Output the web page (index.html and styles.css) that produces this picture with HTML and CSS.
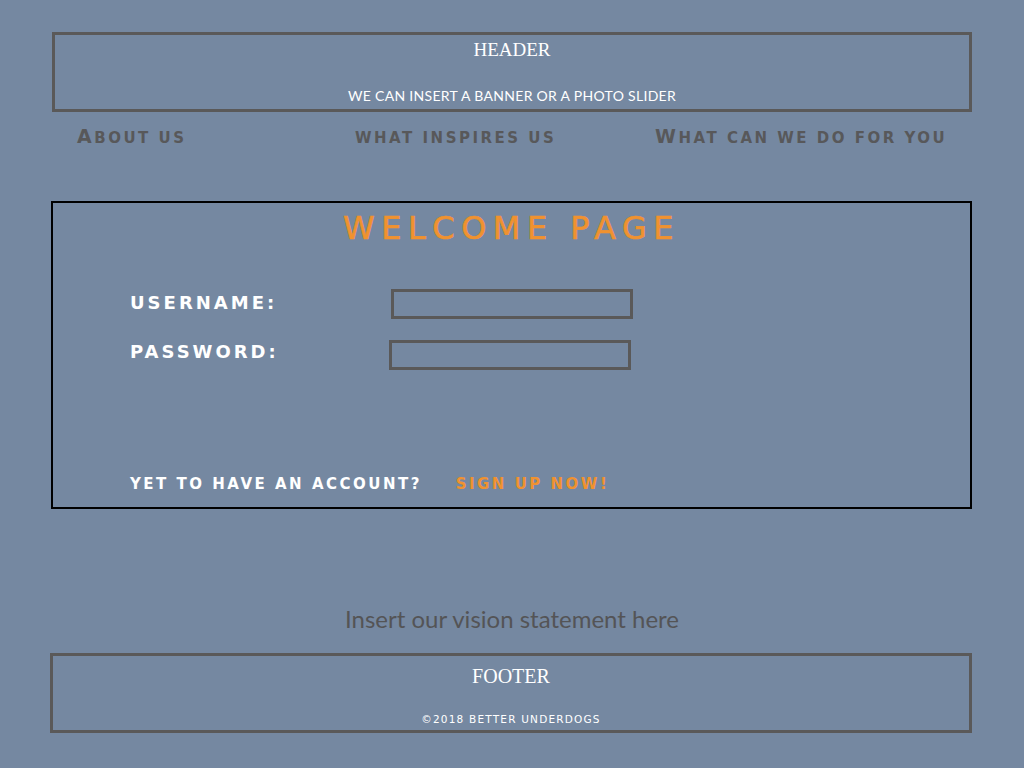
FILE: index.html
```html
<!DOCTYPE html>
<html lang="en">
<head>
<meta charset="utf-8">
<title>Welcome Page</title>
<link rel="stylesheet" href="styles.css">
</head>
<body>
<div class="page">
  <header class="header">
    <h1 class="header-title">HEADER</h1>
    <p class="header-banner">WE CAN INSERT A BANNER OR A PHOTO SLIDER</p>
  </header>
  <nav class="nav">
    <a class="nav-link nav-link-cap">About us</a>
    <a class="nav-link">what inspires us</a>
    <a class="nav-link nav-link-cap">What can we do for you</a>
  </nav>
  <main class="welcome">
    <h2 class="welcome-title">WELCOME PAGE</h2>
    <form class="login">
      <label class="login-label" for="u">USERNAME:</label>
      <input class="login-input" id="u" type="text">
      <label class="login-label login-label-pw" for="p">PASSWORD:</label>
      <input class="login-input login-input-pw" id="p" type="password">
    </form>
    <p class="signup">YET TO HAVE AN ACCOUNT? <a class="signup-link">SIGN UP NOW!</a></p>
  </main>
  <p class="vision">Insert our vision statement here</p>
  <footer class="footer">
    <h3 class="footer-title">FOOTER</h3>
    <p class="footer-copy">©2018 BETTER UNDERDOGS</p>
  </footer>
</div>
</body>
</html>
```

FILE: styles.css
```css
html, body {
  margin: 0;
  padding: 0;
  background: #7588a1;
  height: 100%;
}
.page {
  width: 920px;
  margin: 0 auto;
  padding-top: 32px;
  display: flex;
  flex-direction: column;
}
.header {
  box-sizing: border-box;
  height: 80px;
  border: 3px solid #5a5959;
  padding-top: 3px;
  display: flex;
  flex-direction: column;
  align-items: center;
}
.header-title {
  margin: 0;
  font-family: "Liberation Serif", "DejaVu Serif", serif;
  font-weight: normal;
  font-size: 19px;
  line-height: 24px;
  color: #fff;
}
.header-banner {
  margin: 25px 0 0;
  font-family: "Lato", "Noto Sans", sans-serif;
  font-size: 14px;
  line-height: 18px;
  color: #fff;
  letter-spacing: 0.3px;
}
.nav {
  margin-top: 12px;
  height: 24px;
  padding-left: 25px;
  display: grid;
  grid-template-columns: 278px 300px auto;
  align-items: baseline;
}
.nav-link {
  font-family: "DejaVu Sans", sans-serif;
  text-transform: uppercase;
  font-weight: bold;
  font-size: 15px;
  line-height: 24px;
  letter-spacing: 2.5px;
  color: #58585a;
}
.nav-link-cap::first-letter {
  font-size: 19px;
}
.welcome {
  box-sizing: border-box;
  margin-top: 53px;
  margin-left: -1px;
  height: 308px;
  border: 2px solid #000;
  padding: 7px 0 0 77px;
  display: flex;
  flex-direction: column;
}
.welcome-title {
  margin: 0 0 0 -77px;
  text-align: center;
  font-family: "DejaVu Sans", sans-serif;
  font-weight: normal;
  font-size: 32px;
  line-height: 36px;
  letter-spacing: 6.5px;
  -webkit-text-stroke: 0.6px #f0922f;
  color: #f0922f;
}
.login {
  margin-top: 43px;
  display: grid;
  grid-template-columns: 261px 242px;
  grid-auto-rows: 30px;
  row-gap: 21px;
  align-items: center;
}
.login-label {
  font-family: "DejaVu Sans", sans-serif;
  font-weight: bold;
  font-size: 18px;
  letter-spacing: 3px;
  color: #fff;
  margin-bottom: 4px;
}
.login-label-pw {
  margin-bottom: 8px;
}
.login-input {
  box-sizing: border-box;
  width: 242px;
  height: 30px;
  border: 3px solid #5a5959;
  background: transparent;
  margin: 0;
}
.login-input-pw {
  margin-left: -2px;
}
.signup {
  margin: 104px 0 0;
  font-family: "DejaVu Sans", sans-serif;
  font-weight: bold;
  font-size: 15px;
  line-height: 20px;
  letter-spacing: 2.5px;
  color: #fff;
}
.signup-link {
  margin-left: 26px;
  color: #f0922f;
}
.vision {
  margin: 95px 0 0;
  text-align: center;
  font-family: "Lato", "Noto Sans", sans-serif;
  font-size: 24px;
  line-height: 30px;
  color: #545456;
}
.footer {
  box-sizing: border-box;
  margin-top: 19px;
  margin-left: -2px;
  height: 80px;
  border: 3px solid #5a5959;
  padding-top: 8px;
  display: flex;
  flex-direction: column;
  align-items: center;
}
.footer-title {
  margin: 0;
  font-family: "Liberation Serif", "DejaVu Serif", serif;
  font-weight: normal;
  font-size: 20px;
  line-height: 24px;
  color: #fff;
}
.footer-copy {
  margin: 24px 0 0;
  font-family: "DejaVu Sans", sans-serif;
  font-size: 10.5px;
  line-height: 14px;
  letter-spacing: 1.2px;
  color: #fff;
}
```
